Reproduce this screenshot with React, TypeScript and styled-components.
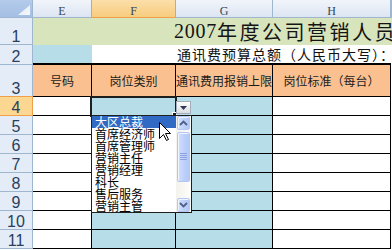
import React from 'react';
import styled, { createGlobalStyle, css } from 'styled-components';

const Global = createGlobalStyle`
  html, body { margin: 0; padding: 0; background: #fff; overflow: hidden; }
  body { font-family: "Noto Sans CJK SC", sans-serif; }
  * { box-sizing: border-box; }
`;

const CJK = `"Noto Sans CJK SC", "Noto Sans", sans-serif`;

const Sheet = styled.div`
  position: relative;
  display: grid;
  grid-template-columns: 33px 59px 84px 97px 118px 1px;
  grid-template-rows: 18px 27px 20px 32px repeat(8, 19px) 1fr;
  width: 392px;
  height: 250px;
  overflow: hidden;
  background: #fff;
`;

const Corner = styled.div`
  position: relative;
  background: linear-gradient(#b4cbeb, #a4bfe4);
  border-right: 1px solid #9eb6ce;
  border-bottom: 1px solid #9eb6ce;
`;

const CornerMark = styled.svg`
  position: absolute;
  right: 2px;
  bottom: 2px;
`;

const ColHeader = styled.div<{ $active?: boolean }>`
  display: flex;
  justify-content: center;
  align-items: flex-end;
  font-family: "Liberation Serif", serif;
  font-size: 12px;
  line-height: 12px;
  color: #34465c;
  background: linear-gradient(#f1f5fb, #dce5f2);
  border-right: 1px solid #9eb6ce;
  border-bottom: 1px solid #9eb6ce;
  ${(p) =>
    p.$active &&
    css`
      background: linear-gradient(#fbdfa9, #f8cc7e);
      border-right-color: #f0a049;
      border-bottom-color: #f0a049;
      box-shadow: -1px 0 0 #f0a049;
    `}
`;

const RowHeader = styled.div<{ $active?: boolean }>`
  display: flex;
  justify-content: center;
  align-items: flex-end;
  font-family: "Liberation Sans", sans-serif;
  font-size: 16px;
  line-height: 14px;
  color: #27405f;
  background: #e4ecf7;
  border-right: 1px solid #9eb6ce;
  border-bottom: 1px solid #9eb6ce;
  ${(p) =>
    p.$active &&
    css`
      background: #fcd791;
      border-right-color: #f0a049;
      border-bottom-color: #f0a049;
      box-shadow: 0 -1px 0 #f0a049;
    `}
`;

const TitleCell = styled.div`
  grid-column: 2 / span 5;
  display: flex;
  align-items: center;
  padding-left: 141px;
  background: #d8e4bc;
  white-space: nowrap;
  overflow: hidden;
  color: #141414;
`;

const TitleDigits = styled.span`
  font-family: "Liberation Serif", serif;
  font-size: 20px;
  letter-spacing: 0.75px;
`;

const TitleWords = styled.span`
  font-family: ${CJK};
  font-size: 20px;
  letter-spacing: 2.5px;
`;

const BudgetLabelCell = styled.div<{ $fill?: string; $span?: number }>`
  grid-column: span ${(p) => p.$span ?? 1};
  display: flex;
  align-items: center;
  padding-left: ${(p) => (p.$span ? 85 : 0)}px;
  background: ${(p) => p.$fill ?? '#fff'};
  border-bottom: 2px solid #000;
  font-family: ${CJK};
  font-size: 14px;
  letter-spacing: 1px;
  color: #111;
  white-space: nowrap;
  overflow: hidden;
`;

const LabelCell = styled.div`
  display: flex;
  align-items: center;
  justify-content: center;
  background: #fac090;
  border-right: 1px solid #000;
  border-bottom: 1px solid #000;
  font-family: ${CJK};
  font-size: 12px;
  color: #1c1c1c;
  white-space: nowrap;
  overflow: hidden;
`;

const DataCell = styled.div<{ $fill: string }>`
  background: ${(p) => p.$fill};
  border-right: 1px solid #000;
  border-bottom: 1px solid #000;
`;

const Filler = styled.div<{ $fill?: string }>`
  background: ${(p) => p.$fill ?? '#fff'};
`;

const ActiveCell = styled.div`
  position: absolute;
  left: 90px;
  top: 96px;
  width: 87px;
  height: 21px;
  border: 2px solid #1e1e1e;
  pointer-events: none;
`;

const FillHandle = styled.div`
  position: absolute;
  left: 172px;
  top: 112px;
  width: 5px;
  height: 5px;
  background: #1e1e1e;
  border: 1px solid #fff;
`;

const DropButton = styled.div`
  position: absolute;
  left: 176px;
  top: 101px;
  width: 15px;
  height: 13px;
  display: flex;
  align-items: center;
  justify-content: center;
  background: linear-gradient(#fdfdfd, #dcdde2);
  border: 1px solid #a7aebb;
`;

const ListBox = styled.div`
  position: absolute;
  left: 91px;
  top: 115px;
  width: 101px;
  height: 98px;
  display: flex;
  background: #fff;
  border: 1px solid #202020;
  z-index: 2;
`;

const Items = styled.ul`
  flex: 1;
  margin: 0;
  padding: 0;
  list-style: none;
`;

const Item = styled.li<{ $selected?: boolean }>`
  height: 12px;
  padding-left: 3px;
  font-family: ${CJK};
  font-size: 12px;
  line-height: 12px;
  color: ${(p) => (p.$selected ? '#fff' : '#000')};
  background: ${(p) => (p.$selected ? '#316ac5' : 'transparent')};
  white-space: nowrap;
  overflow: hidden;
`;

const ScrollBar = styled.div`
  width: 15px;
  display: flex;
  flex-direction: column;
  background: linear-gradient(to right, #f3f2ec, #fdfdfa);
`;

const lunaButton = css`
  margin: 0 1px;
  border: 1px solid #b3c6f4;
  border-radius: 2px;
  background: linear-gradient(to right, #d3dffd, #bccffa 60%, #b3c8f7);
  box-shadow: inset 1px 1px 0 #eef3ff;
  display: flex;
  align-items: center;
  justify-content: center;
`;

const ScrollButton = styled.div`
  ${lunaButton};
  height: 14px;
  flex: none;
`;

const Thumb = styled.div`
  ${lunaButton};
  margin-top: 2px;
  height: 50px;
  flex: none;
`;

const Track = styled.div`
  flex: 1;
`;

const Cursor = styled.svg`
  position: absolute;
  left: 159px;
  top: 122px;
  z-index: 3;
`;

const columns = ['E', 'F', 'G', 'H'];
const labels = ['号码', '岗位类别', '通讯费用报销上限', '岗位标准（每台）'];
const bodyFills = ['#fff', '#b7dee8', '#b7dee8', '#fff'];
const bodyRows = [4, 5, 6, 7, 8, 9, 10, 11];
const options = ['大区总裁', '首席经济师', '首席管理师', '营销主任', '营销经理', '科长', '售后服务', '营销主管'];

const Chevron = ({ up }: { up?: boolean }) => (
  <svg width="9" height="6" viewBox="0 0 9 6">
    <path
      d={up ? 'M1 5 L4.5 1.5 L8 5' : 'M1 1 L4.5 4.5 L8 1'}
      fill="none"
      stroke="#4d6185"
      strokeWidth="1.8"
    />
  </svg>
);

const Grip = () => (
  <svg width="7" height="8" viewBox="0 0 7 8">
    {[0.5, 2.5, 4.5, 6.5].map((y) => (
      <line key={y} x1="0" x2="7" y1={y} y2={y} stroke="#8ca3e0" strokeWidth="1" />
    ))}
  </svg>
);

export default function App() {
  return (
    <>
      <Global />
      <Sheet>
        <Corner>
          <CornerMark width="12" height="10" viewBox="0 0 12 10">
            <defs>
              <linearGradient id="cm" x1="0" y1="0" x2="1" y2="1">
                <stop offset="0" stopColor="#dfe8f5" />
                <stop offset="1" stopColor="#f7f9fc" />
              </linearGradient>
            </defs>
            <polygon points="12,0 12,10 0,10" fill="url(#cm)" />
          </CornerMark>
        </Corner>
        {columns.map((c) => (
          <ColHeader key={c} $active={c === 'F'}>
            {c}
          </ColHeader>
        ))}
        <ColHeader />

        <RowHeader>1</RowHeader>
        <TitleCell>
          <TitleDigits>2007</TitleDigits>
          <TitleWords>年度公司营销人员</TitleWords>
        </TitleCell>

        <RowHeader>2</RowHeader>
        <BudgetLabelCell $fill="#b7dee8" />
        <BudgetLabelCell $span={3}>通讯费预算总额（人民币大写）：</BudgetLabelCell>
        <Filler />

        <RowHeader>3</RowHeader>
        {labels.map((l) => (
          <LabelCell key={l}>{l}</LabelCell>
        ))}
        <Filler />

        {bodyRows.map((r) => (
          <React.Fragment key={r}>
            <RowHeader $active={r === 4}>{r}</RowHeader>
            {bodyFills.map((f, i) => (
              <DataCell key={i} $fill={f} />
            ))}
            <Filler />
          </React.Fragment>
        ))}

        <ActiveCell />
        <FillHandle />
        <DropButton>
          <svg width="7" height="4" viewBox="0 0 7 4">
            <polygon points="0,0 7,0 3.5,4" fill="#2f3858" />
          </svg>
        </DropButton>
        <ListBox>
          <Items>
            {options.map((o, i) => (
              <Item key={o} $selected={i === 0}>
                {o}
              </Item>
            ))}
          </Items>
          <ScrollBar>
            <ScrollButton>
              <Chevron up />
            </ScrollButton>
            <Thumb>
              <Grip />
            </Thumb>
            <Track />
            <ScrollButton>
              <Chevron />
            </ScrollButton>
          </ScrollBar>
        </ListBox>
        <Cursor width="13" height="20" viewBox="0 0 13 20">
          <path
            d="M0.5 0.5 L0.5 16.5 L4.5 12.5 L7.5 18.5 L9.5 17.5 L6.5 11.5 L11.5 11.5 Z"
            fill="#fff"
            stroke="#000"
            strokeWidth="1"
            strokeLinejoin="miter"
          />
        </Cursor>
      </Sheet>
    </>
  );
}
